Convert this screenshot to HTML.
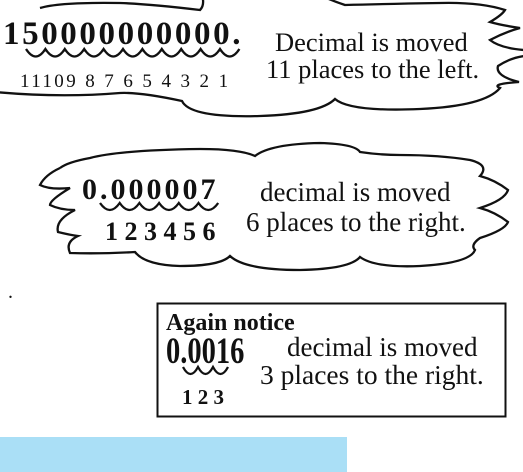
<!DOCTYPE html>
<html><head><meta charset="utf-8"><style>
html,body{margin:0;padding:0;background:#fff;width:523px;height:472px;overflow:hidden;position:relative;font-family:"Liberation Serif",serif;color:#111}
.t{position:absolute;white-space:nowrap;line-height:1}
.b{font-weight:bold}
</style></head><body>
<svg width="523" height="472" style="position:absolute;left:0;top:0" fill="none" stroke="#111" stroke-width="2.3">
<path d="M-5,92 Q60,98 120,93 Q140,92 182,101 Q190,118 260,116 Q320,114 335,99 Q350,112 420,109 Q485,106 500,88 Q490,84 519,82 Q495,76 498,66 Q510,58 524,56 M524,50 Q500,48 490,40 Q505,32 520,28 Q500,25 490,22 Q502,15 505,10 Q480,2 440,3 Q380,4 345,5 Q330,0 320,-5 M202,-5 Q205,5 200,10 Q150,4 120,3 Q60,2 40,8"/>
<path d="M26,49 q9.7,15 19.4,0 q9.7,15 19.4,0 q9.7,15 19.4,0 q9.7,15 19.4,0 q9.7,15 19.4,0 q9.7,15 19.4,0 q9.7,15 19.4,0 q9.7,15 19.4,0 q9.7,15 19.4,0 q9.7,15 19.4,0 q9.7,15 19.4,0"/>
<path d="M60,168 Q45,175 40,185 Q50,190 70,188 Q50,200 50,205 Q60,210 75,210 Q55,220 58,232 Q70,235 78,236 Q65,242 70,253 Q100,254 135,252 Q145,265 180,266 Q220,266 230,256 Q245,270 300,270 Q350,269 360,257 Q375,268 420,266 Q470,263 475,250 Q470,245 480,238 Q505,230 508,222 Q495,212 480,208 Q505,200 508,190 Q495,180 480,176 Q490,165 470,160 Q440,155 400,155 Q380,155 360,152 Q355,144 320,143 Q270,144 255,156 Q240,149 200,149 Q120,150 90,158 Q68,162 60,168"/>
<path d="M100,203 q9.8,14 19.7,0 q9.8,14 19.7,0 q9.8,14 19.7,0 q9.8,14 19.7,0 q9.8,14 19.7,0 q9.8,14 19.7,0"/>
<rect x="157.5" y="303.5" width="348" height="113" stroke-width="2"/>
<path d="M183,367 q7.5,14 15,0 q7.5,14 15,0 q7.5,14 15,0"/>
</svg>
<div class="t b" style="left:3px;top:18px;font-size:33px;letter-spacing:2.6px">150000000000.</div>
<div class="t" style="left:20px;top:72px;font-size:19px;letter-spacing:2.4px">11109 8 7 6 5 4 3 2 1</div>
<div class="t" style="left:275px;top:29px;font-size:26.5px">Decimal is moved</div>
<div class="t" style="left:266px;top:56px;font-size:26.5px">11 places to the left.</div>
<div class="t b" style="left:82px;top:175px;font-size:30px;letter-spacing:3px">0.000007</div>
<div class="t b" style="left:105px;top:219px;font-size:26px">1 2 3 4 5 6</div>
<div class="t" style="left:260px;top:179px;font-size:27px">decimal is moved</div>
<div class="t" style="left:246px;top:209px;font-size:27px">6 places to the right.</div>
<div class="t" style="left:8px;top:282px;font-size:20px">.</div>
<div class="t b" style="left:166px;top:311px;font-size:24px">Again notice</div>
<div class="t b" style="left:166px;top:333px;font-size:30px;transform:scale(0.95,1.25);transform-origin:0 0">0.0016</div>
<div class="t" style="left:287px;top:334px;font-size:27px">decimal is moved</div>
<div class="t" style="left:260px;top:361px;font-size:27.5px">3 places to the right.</div>
<div class="t b" style="left:182px;top:387px;font-size:21px">1 2 3</div>
<div style="position:absolute;left:0;top:437px;width:347px;height:35px;background:#aadff6"></div>
</body></html>
